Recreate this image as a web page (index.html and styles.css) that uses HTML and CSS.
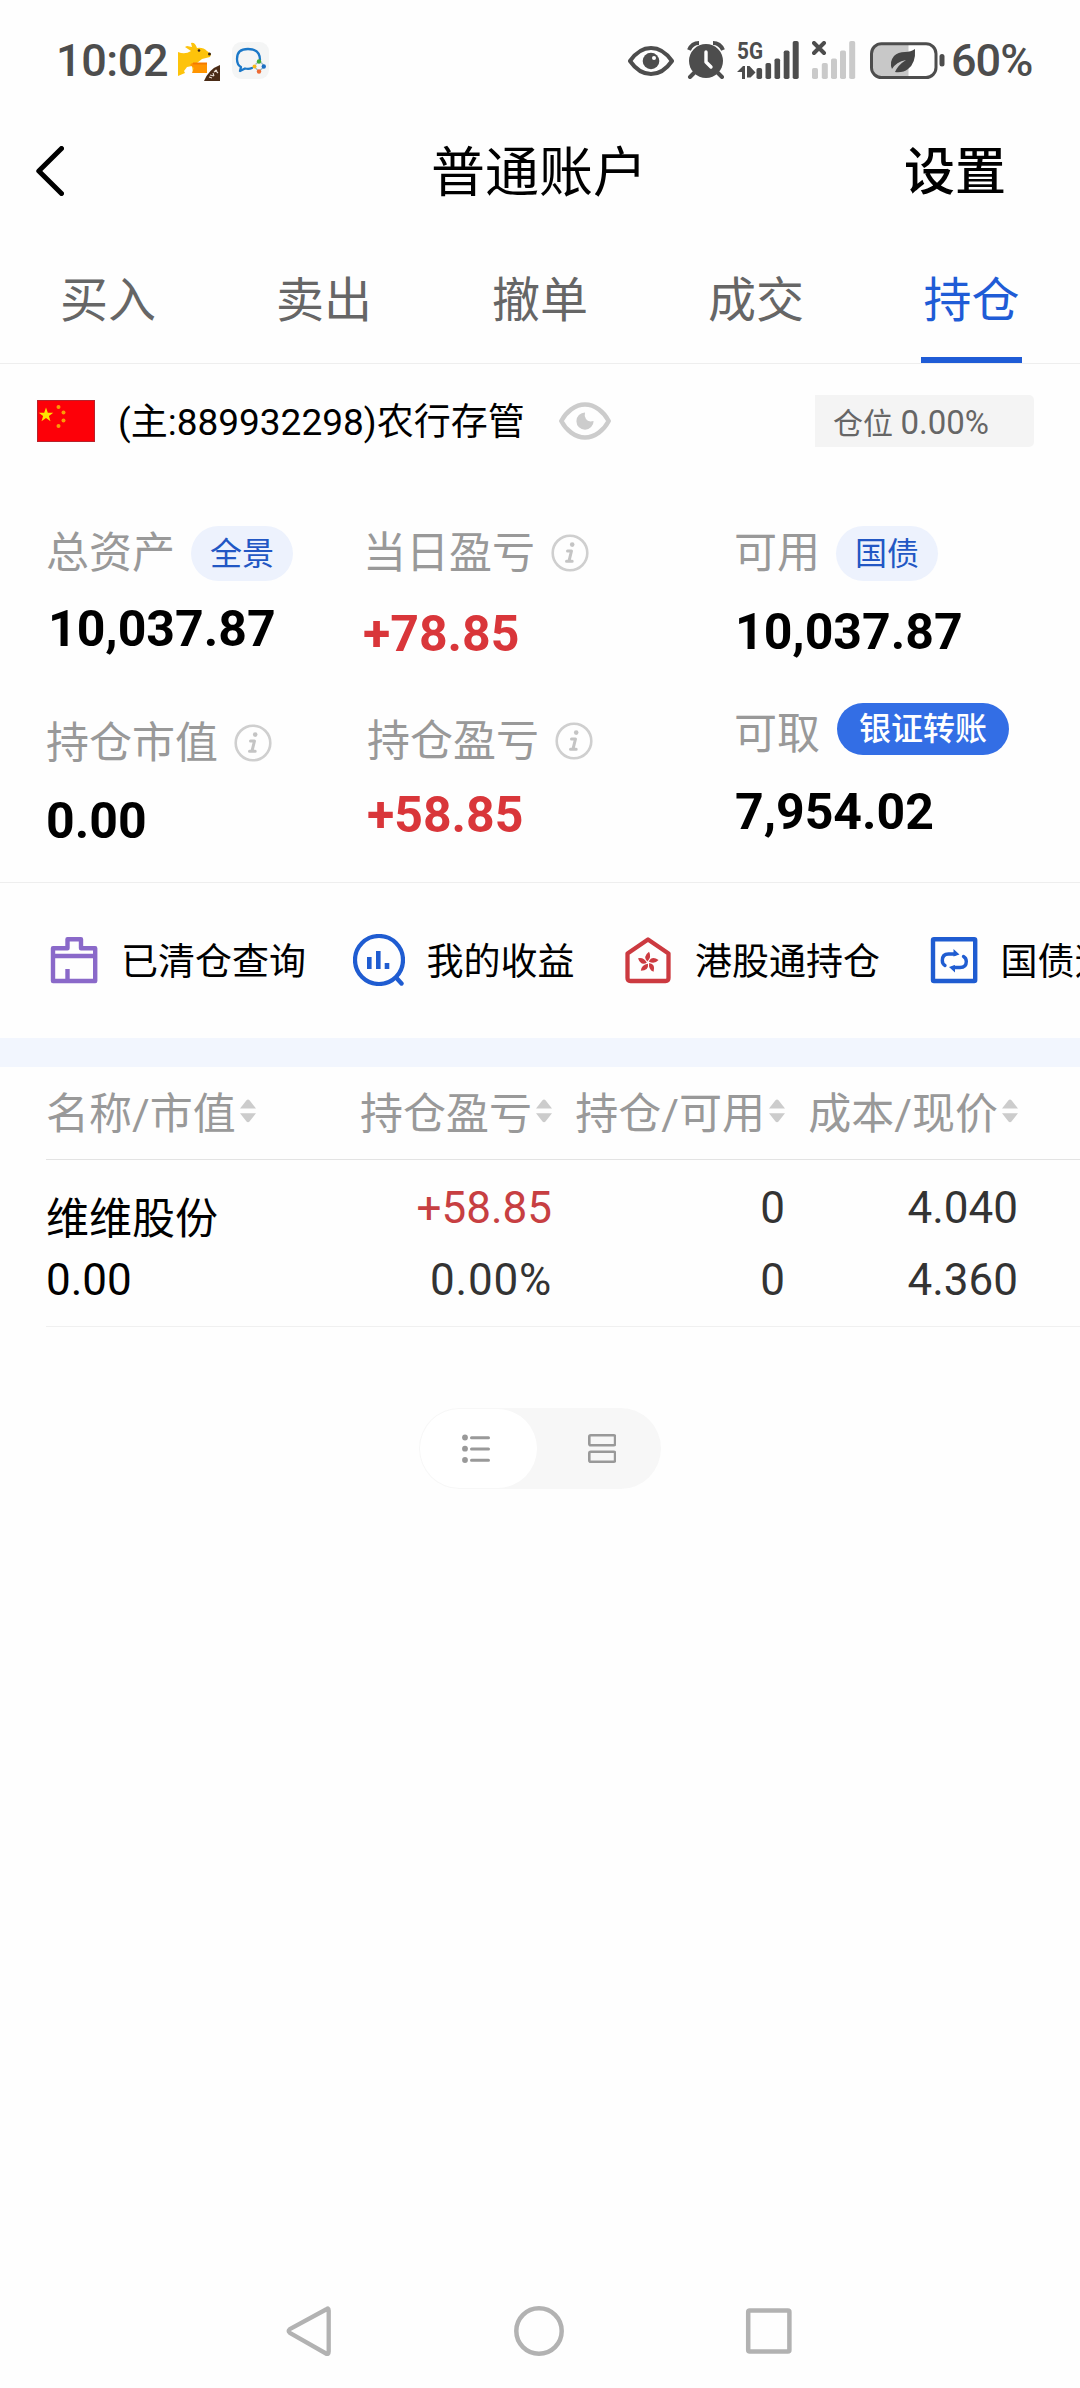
FILE: index.html
```
<!DOCTYPE html>
<html lang="zh-CN">

<head>
    <meta charset="UTF-8">
    <meta name="viewport" content="width=device-width, initial-scale=1.0">
    <title>普通账户</title>
    <link rel="stylesheet" href="styles.css">
</head>

<body>
    <!-- shared icons -->
    <svg class="defs" width="0" height="0">
        <symbol id="info" viewBox="0 0 38 38">
            <circle cx="19" cy="19" r="17.3" fill="none" stroke="#cfcfcf" stroke-width="2.6" />
            <circle cx="21.2" cy="10.6" r="2.3" fill="#c4c4c4" />
            <path d="M16.5 17h4l-2.6 10.3h3.3M15.5 27.3h3" fill="none" stroke="#c4c4c4" stroke-width="3" stroke-linecap="round" stroke-linejoin="round" />
        </symbol>
        <symbol id="sort" viewBox="0 0 16 24">
            <path d="M0 9.5 L6.5 1.2 Q8 -.2 9.5 1.2 L16 9.5z M0 14.2h16L9.5 22.5Q8 23.8 6.5 22.5z" fill="#cccccc" />
        </symbol>
    </svg>

    <div class="status-bar">
        <span class="clock">10:02</span>
        <svg class="app-kangaroo" viewBox="0 0 42 39">
            <path d="M0 10 Q7 13 13 9 L7 5 L9 4 L14 5 L13 1 Q17 0 19 6 Q25 5 29 9 L33 12 L32 15 L24 17 L19 21 L29 21 L29 31 L15 31 L14 24 L9 25 L6 29 L7 31 L0 34z" fill="#fdc30b" />
            <path d="M14 21h15v10H14l2-5-4-3z" fill="#ff9500" />
            <path d="M15 21.500h14" stroke="#f57a00" stroke-width="2" />
            <circle cx="21" cy="8.500" r="1.300" fill="#3b2412" />
            <circle cx="31.500" cy="12" r="1.500" fill="#3b2412" />
            <path d="M26 39 Q31 27 42 23V39z" fill="#4a2b16" />
            <path d="M31 35l3 1M32 33l4 1M35 31l1 3M37 28l3 3M36 30l3-2" stroke="#e8dcd2" stroke-width="1.100" />
        </svg>
        <svg class="app-chat" viewBox="0 0 37 37">
            <rect width="37" height="37" rx="9" fill="#f4f5f5" />
            <path d="M28 18 Q28 7 16 7 Q5 7 5 17 Q5 23 9 25 L8 29 L13 26.500 Q17 27.500 20 26" fill="none" stroke="#1b78c8" stroke-width="2.300" stroke-linecap="round" stroke-linejoin="round" />
            <path d="M23.500 22.500l4-4M22.500 25l4 4M28 28.500l4-4M28.500 20l4 4" stroke="#9bb9c4" stroke-width="1.200" />
            <circle cx="27" cy="19.500" r="2.200" fill="#3fae35" />
            <circle cx="22.500" cy="24.500" r="2" fill="#f6b81a" />
            <circle cx="27" cy="29.500" r="2.200" fill="#ee6a32" />
            <circle cx="31.800" cy="24.500" r="2.200" fill="#1b6fc4" />
        </svg>

        <div class="status-right">
            <svg class="st-eye" viewBox="0 0 46 30">
                <path d="M2 15Q11 2 23 2T44 15Q35 28 23 28T2 15z" fill="none" stroke="#4d4d4d" stroke-width="4" />
                <circle cx="23" cy="15" r="8.300" fill="#4d4d4d" />
                <circle cx="26" cy="12" r="2" fill="#fff" />
            </svg>
            <svg class="st-alarm" viewBox="0 0 38 38">
                <circle cx="19" cy="20" r="17" fill="#4d4d4d" />
                <path d="M2 9Q5 2 12 2M36 9Q33 2 26 2" fill="none" stroke="#4d4d4d" stroke-width="4" />
                <path d="M8 31l-5 5M30 31l5 5" stroke="#4d4d4d" stroke-width="4" stroke-linecap="round" />
                <path d="M19 11v10l5 5" fill="none" stroke="#fff" stroke-width="3.400" stroke-linecap="round" stroke-linejoin="round" />
            </svg>
            <svg class="st-signal" viewBox="0 0 62 38">
                <text class="net" x="0" y="18" textLength="26" lengthAdjust="spacingAndGlyphs">5G</text>
                <path d="M0 31l6-6h2v13H5v-7zM10 25h2.500l6 6.500-5 5H10z" fill="#4d4d4d" />
                <g fill="#4d4d4d">
                    <rect x="19.500" y="27" width="5.600" height="11" rx="1.800" />
                    <rect x="28.500" y="22" width="5.600" height="16" rx="1.800" />
                    <rect x="37.500" y="17.500" width="5.600" height="20.500" rx="1.800" />
                    <rect x="46.700" y="9.500" width="5.800" height="28.500" rx="1.800" />
                    <rect x="55.700" y="0" width="6" height="38" rx="1.800" />
                </g>
            </svg>
            <svg class="st-nosim" viewBox="0 0 44 38">
                <path d="M2 2l10 10M12 2L2 12" stroke="#4d4d4d" stroke-width="4" stroke-linecap="round" />
                <g fill="#cacaca">
                    <rect x="0" y="27" width="6" height="11" rx="1.800" />
                    <rect x="9.800" y="22" width="6" height="16" rx="1.800" />
                    <rect x="19" y="17.500" width="6" height="20.500" rx="1.800" />
                    <rect x="28" y="9.500" width="6" height="28.500" rx="1.800" />
                    <rect x="37.200" y="0" width="6" height="38" rx="1.800" />
                </g>
            </svg>
            <svg class="st-battery" viewBox="0 0 76 37">
                <path d="M38.500 3H12Q3 3 3 12V25Q3 34 12 34H38.500z" fill="#c8c8c8" />
                <rect x="1.500" y="1.700" width="64.500" height="33.800" rx="10" fill="none" stroke="#4d4d4d" stroke-width="3" />
                <path d="M45 7Q46 21 38 27Q33 31 25 30Q28 23 36 18Q26 20 22 27Q19 20 24 14Q28 10 35 10Q41 10 45 7z" fill="#454545" />
                <rect x="69.500" y="12" width="5" height="12.500" rx="2.500" fill="#4d4d4d" />
            </svg>
            <span class="percent">60%</span>
        </div>
    </div>

    <div class="header">
        <svg class="back" viewBox="0 0 28 50">
            <path d="M25.500 2.500L2.800 25L25.500 47.500" fill="none" stroke="#000" stroke-width="5" stroke-linecap="round" stroke-linejoin="round" />
        </svg>
        <h1>普通账户</h1>
        <span class="settings">设置</span>
    </div>

    <div class="tabs">
        <div class="tab">买入</div>
        <div class="tab">卖出</div>
        <div class="tab">撤单</div>
        <div class="tab">成交</div>
        <div class="tab active">持仓</div>
    </div>

    <div class="account">
        <svg class="flag" viewBox="0 0 58 42">
            <rect x=".5" y=".5" width="57" height="41" fill="#fd0008" stroke="#b8222b" />
            <path d="M9 7.500l1.800 5.200h5.500l-4.400 3.300 1.600 5.300L9 18.100l-4.500 3.200 1.600-5.300-4.400-3.300h5.500z" fill="#fee400" />
            <g fill="#fb9a06">
                <circle cx="21.500" cy="7" r="2" />
                <circle cx="26.500" cy="12.500" r="2" />
                <circle cx="26.500" cy="20.500" r="2" />
                <circle cx="21.500" cy="26" r="2" />
            </g>
        </svg>
        <span class="account-name">(主:889932298)农行存管</span>
        <svg class="eye" viewBox="0 0 52 38">
            <path d="M2.300 19C7 10 16 2.500 26 2.500S45 10 49.700 19C45 28 36 35.500 26 35.500S7 28 2.300 19z" fill="none" stroke="#cccccc" stroke-width="4.400" />
            <path d="M26 10.500A8.600 8.600 0 1 0 34.600 19Q29 20.500 27 17Q25 14 26 10.500z" fill="#cccccc" />
        </svg>
        <span class="position">仓位 <b>0.00%</b></span>
    </div>

    <div class="summary">
        <div class="col col-assets">
            <div class="label first">总资产 <span class="pill">全景</span></div>
            <div class="value shift">10,037.87</div>
            <div class="label second">持仓市值 <svg class="info"><use href="#info" /></svg></div>
            <div class="value last">0.00</div>
        </div>
        <div class="col col-profit">
            <div class="label first">当日盈亏 <svg class="info"><use href="#info" /></svg></div>
            <div class="value up">+78.85</div>
            <div class="label second">持仓盈亏 <svg class="info"><use href="#info" /></svg></div>
            <div class="value up last">+58.85</div>
        </div>
        <div class="col col-cash">
            <div class="label first">可用 <span class="pill">国债</span></div>
            <div class="value">10,037.87</div>
            <div class="label second">可取 <span class="pill solid">银证转账</span></div>
            <div class="value last">7,954.02</div>
        </div>
    </div>

    <div class="shortcuts">
        <div class="shortcut">
            <svg viewBox="0 0 52 52">
                <g fill="none" stroke="#8a69c9" stroke-width="4.400" stroke-linejoin="round">
                    <path d="M6 14.200H20.500V5.200H34V14.200H48.200V47H6z" />
                    <path d="M6 22H48.200M20.500 35V47" />
                </g>
            </svg>
            <span>已清仓查询</span>
        </div>
        <div class="shortcut">
            <svg viewBox="0 0 52 52">
                <circle cx="26" cy="26" r="24" fill="none" stroke="#1f5cd1" stroke-width="4.200" />
                <path d="M43.500 44l5 5.500" stroke="#1f5cd1" stroke-width="4.400" stroke-linecap="round" />
                <path d="M16.300 23v12M25.300 17v18M34 29v6" stroke="#1f5cd1" stroke-width="4.600" />
            </svg>
            <span>我的收益</span>
        </div>
        <div class="shortcut">
            <svg viewBox="0 0 52 52">
                <path d="M27 5.500L47.500 19.500V44Q47.500 47 44.500 47H9.500Q6.500 47 6.500 44V19.500z" fill="none" stroke="#cc3a40" stroke-width="4.300" stroke-linejoin="round" />
                <g fill="#cc3a40">
                    <path id="petal" d="M26.300 27.500Q21.500 22.500 28 17.700Q31 23 26.300 27.500z" />
                    <use href="#petal" transform="rotate(72 27 28.500)" />
                    <use href="#petal" transform="rotate(144 27 28.500)" />
                    <use href="#petal" transform="rotate(216 27 28.500)" />
                    <use href="#petal" transform="rotate(288 27 28.500)" />
                </g>
            </svg>
            <span>港股通持仓</span>
        </div>
        <div class="shortcut">
            <svg viewBox="0 0 52 52">
                <rect x="6" y="5.200" width="42.200" height="41.800" rx="1" fill="none" stroke="#1f5cd1" stroke-width="4.400" />
                <path d="M18 31.500Q15.300 30 15.300 26.500Q15.300 20 21.500 20H28M36.500 22.500Q39.300 24 39.300 27.500Q39.300 33.500 33 33.500H26" fill="none" stroke="#1f5cd1" stroke-width="3.400" stroke-linecap="round" />
                <path d="M26.500 15L32.500 20.500L26.500 22.500zM28 38.500L22 33L28 31z" fill="#1f5cd1" />
            </svg>
            <span>国债逆回购</span>
        </div>
    </div>

    <div class="holdings">
        <div class="row head">
            <span>名称/市值<svg class="sort"><use href="#sort" /></svg></span>
            <span>持仓盈亏<svg class="sort"><use href="#sort" /></svg></span>
            <span>持仓/可用<svg class="sort"><use href="#sort" /></svg></span>
            <span>成本/现价<svg class="sort"><use href="#sort" /></svg></span>
        </div>
        <div class="row stock">
            <div class="cell name">
                <p>维维股份</p>
                <p>0.00</p>
            </div>
            <div class="cell">
                <p class="up-light">+58.85</p>
                <p class="rate">0.00%</p>
            </div>
            <div class="cell">
                <p>0</p>
                <p>0</p>
            </div>
            <div class="cell">
                <p>4.040</p>
                <p>4.360</p>
            </div>
        </div>
    </div>

    <div class="view-switch">
        <div class="view on">
            <svg viewBox="0 0 28 29">
                <g fill="#999999">
                    <circle cx="3" cy="3.500" r="2.900" />
                    <circle cx="3" cy="14.700" r="2.900" />
                    <circle cx="3" cy="26" r="2.900" />
                </g>
                <path d="M9.500 3.700H26.500M9.500 15H26.500M9.500 26.200H26.500" stroke="#999999" stroke-width="3" stroke-linecap="round" />
            </svg>
        </div>
        <div class="view">
            <svg viewBox="0 0 28 29">
                <g fill="none" stroke="#999999" stroke-width="2.600">
                    <rect x="1.300" y="1.300" width="25.800" height="10" rx="1.500" />
                    <rect x="1.300" y="17.700" width="25.800" height="10" rx="1.500" />
                </g>
            </svg>
        </div>
    </div>

    <div class="nav-bar">
        <svg viewBox="0 0 50 50">
            <path d="M42 3.500Q44.700 1 44.700 4.500V45.500Q44.700 49 42 47.500L5.800 26.800Q3.500 25 5.800 23.200z" fill="none" stroke="#b2b2b2" stroke-width="4.300" stroke-linejoin="round" />
        </svg>
        <svg viewBox="0 0 50 50">
            <circle cx="25" cy="25" r="22.700" fill="none" stroke="#b2b2b2" stroke-width="4.500" />
        </svg>
        <svg viewBox="0 0 50 50">
            <rect x="4.200" y="4.400" width="41.200" height="41.200" rx="1.500" fill="none" stroke="#b2b2b2" stroke-width="4.500" />
        </svg>
    </div>
</body>

</html>
```
FILE: styles.css
```
* {
    margin: 0;
    padding: 0;
    box-sizing: border-box;
}

body {
    display: flex;
    flex-direction: column;
    width: 1080px;
    min-height: 2388px;
    overflow-x: hidden;
    background-color: #fefefe;
    color: #000;
    font-family: Roboto, "Noto Sans CJK SC", sans-serif;
}

svg {
    display: block;
    flex: none;
}

.defs {
    height: 0;
    width: 0;
    position: absolute;
}

/* status bar */
.status-bar {
    display: flex;
    align-items: center;
    height: 120px;
    padding: 0 49px 0 56px;
    color: #4d4d4d;
}

.clock,
.percent {
    padding-top: 1px;
    font-size: 45px;
    font-weight: 500;
    line-height: 60px;
}

.clock {
    width: 122px;
    letter-spacing: -0.4px;
}

.app-kangaroo {
    width: 42px;
    height: 39px;
    margin-top: 3px;
}

.app-chat {
    width: 37px;
    height: 37px;
    margin-left: 12px;
}

.status-right {
    display: flex;
    align-items: center;
    margin-left: auto;
}

.st-eye {
    width: 46px;
    height: 30px;
    margin: 2px 13px 0 0;
}

.st-alarm {
    width: 38px;
    height: 38px;
    margin-right: 12px;
}

.st-signal {
    width: 62px;
    height: 38px;
    margin-right: 13px;
    overflow: visible;
}

.net {
    font-size: 24px;
    font-weight: 700;
    fill: #4d4d4d;
}

.st-nosim {
    width: 44px;
    height: 38px;
    margin-right: 14px;
}

.st-battery {
    width: 76px;
    height: 37px;
    margin-right: 5px;
}

.percent {
    width: 80px;
    letter-spacing: -1px;
}

/* title */
.header {
    display: grid;
    grid-template-columns: 1fr auto 1fr;
    align-items: center;
    height: 102px;
    padding: 0 74px 0 36px;
}

.back {
    width: 28px;
    height: 50px;
}

.header h1 {
    padding-top: 5px;
    font-size: 54px;
    font-weight: 400;
    line-height: 80px;
    margin-left: 36px;
}

.settings {
    justify-self: end;
    padding-top: 4px;
    font-size: 51px;
    font-weight: 500;
    line-height: 80px;
}

/* tabs */
.tabs {
    display: flex;
    height: 142px;
    border-bottom: 1px solid #eeeeee;
}

.tab {
    display: flex;
    flex: 1;
    align-items: center;
    justify-content: center;
    padding-top: 6px;
    color: #666666;
    font-size: 48px;
}

.tab.active {
    flex: none;
    width: 101px;
    margin: 0 58px 0 57px;
    padding-top: 12px;
    border-bottom: 6px solid #1f5cd6;
    color: #1f5cd6;
}

/* account */
.account {
    display: flex;
    align-items: center;
    height: 116px;
    padding: 0 46px 0 37px;
}

.flag {
    width: 58px;
    height: 42px;
    margin-bottom: 2px;
}

.account-name {
    margin-left: 23px;
    padding-top: 2px;
    font-size: 37px;
    line-height: 50px;
    width: 441px;
    white-space: nowrap;
}

.eye {
    width: 52px;
    height: 38px;
    margin-bottom: 2px;
}

.position {
    width: 219px;
    height: 52px;
    margin: 0 0 2px auto;
    padding-left: 18px;
    border-radius: 0 5px 5px 0;
    background-color: #f4f4f4;
    color: #666666;
    font-size: 30px;
    line-height: 56px;
}

.position b {
    font-size: 33px;
    font-weight: 400;
}

/* summary */
.summary {
    display: grid;
    grid-template-columns: 317px 371px 1fr;
    height: 403px;
    padding: 45px 0 0 46px;
    border-bottom: 1px solid #eeeeee;
}

.label {
    display: flex;
    align-items: center;
    height: 56px;
    color: #999999;
    font-size: 43px;
    line-height: 56px;
}

.label.first {
    line-height: 60px;
}

.info {
    width: 38px;
    height: 38px;
    margin: 0 0 1px 16px;
}

.pill {
    height: 55px;
    margin-left: 16px;
    padding: 0 19px;
    border-radius: 28px;
    background-color: #edf2fd;
    color: #2257c4;
    font-size: 32px;
    line-height: 56px;
}

.pill.solid {
    height: 52px;
    margin-left: 17px;
    margin-bottom: 10px;
    padding: 0 22px;
    background-color: #336ee5;
    color: #fff;
    font-weight: 500;
    line-height: 53px;
}

.value {
    height: 60px;
    font-size: 50px;
    font-weight: 700;
    line-height: 60px;
}

.up {
    color: #d9363a;
}

.shift {
    padding-left: 2px;
}

.col-assets .value {
    margin-top: 18px;
}

.col-assets .second {
    margin-top: 56px;
}

.col-assets .last {
    margin-top: 20px;
}

.col-profit .value {
    margin-top: 23px;
}

.col-profit .second {
    margin-top: 49px;
    padding-left: 4px;
}

.col-profit .last {
    margin-top: 16px;
    padding-left: 4px;
}

.col-cash .value {
    margin-top: 21px;
    padding-left: 1px;
}

.col-cash .second {
    margin-top: 44px;
}

.col-cash .last {
    margin-top: 20px;
}

/* shortcuts */
.shortcuts {
    display: flex;
    gap: 46.5px;
    height: 184px;
    padding: 51px 0 0 47px;
    border-bottom: 29px solid #f2f6fe;
    overflow: hidden;
}

.shortcut {
    display: flex;
    flex: none;
    align-items: center;
    height: 52px;
    gap: 22px;
    font-size: 37px;
    line-height: 52px;
    white-space: nowrap;
}

.shortcut span {
    padding-top: 5px;
}

.shortcut svg {
    width: 52px;
    height: 52px;
}

/* holdings */
.row {
    display: grid;
    grid-template-columns: 268px 238px 233px 233px;
    margin-left: 46px;
    padding-right: 62px;
}

.row.head {
    height: 93px;
    padding-bottom: 6px;
    border-bottom: 1px solid #e3e3e3;
    color: #999999;
    font-size: 43px;
}

.row.head span {
    display: flex;
    align-items: center;
    justify-content: flex-end;
    white-space: nowrap;
}

.row.head span:first-child {
    justify-content: flex-start;
}

.sort {
    width: 16px;
    height: 24px;
    margin: 2px 0 0 4px;
}

.row.stock {
    height: 167px;
    padding-top: 12px;
    border-bottom: 1px solid #f0f0f0;
    font-size: 44px;
}

.cell {
    color: #333333;
    text-align: right;
}

.cell p {
    height: 72px;
    line-height: 72px;
}

.cell.name {
    color: #000;
    text-align: left;
}

.cell.name p:first-child {
    padding-top: 11px;
    font-size: 43px;
}

.cell .up-light {
    color: #c73f42;
}

.cell .rate {
    letter-spacing: 0.8px;
}

/* list / card switch */
.view-switch {
    display: flex;
    align-self: center;
    width: 242px;
    height: 81px;
    margin-top: 81px;
    padding: 1px;
    border-radius: 41px;
    background-color: #f7f7f7;
}

.view {
    display: flex;
    flex: 1;
    align-items: center;
    justify-content: center;
    padding-left: 7px;
}

.view svg {
    width: 28px;
    height: 29px;
}

.view.on {
    flex: none;
    width: 117px;
    padding: 0 6px 0 0;
    border-radius: 40px;
    background-color: #fff;
}

/* system navigation */
.nav-bar {
    display: flex;
    justify-content: space-between;
    margin-top: auto;
    padding: 0 286px 32px 284px;
}

.nav-bar svg {
    width: 50px;
    height: 50px;
}
```
